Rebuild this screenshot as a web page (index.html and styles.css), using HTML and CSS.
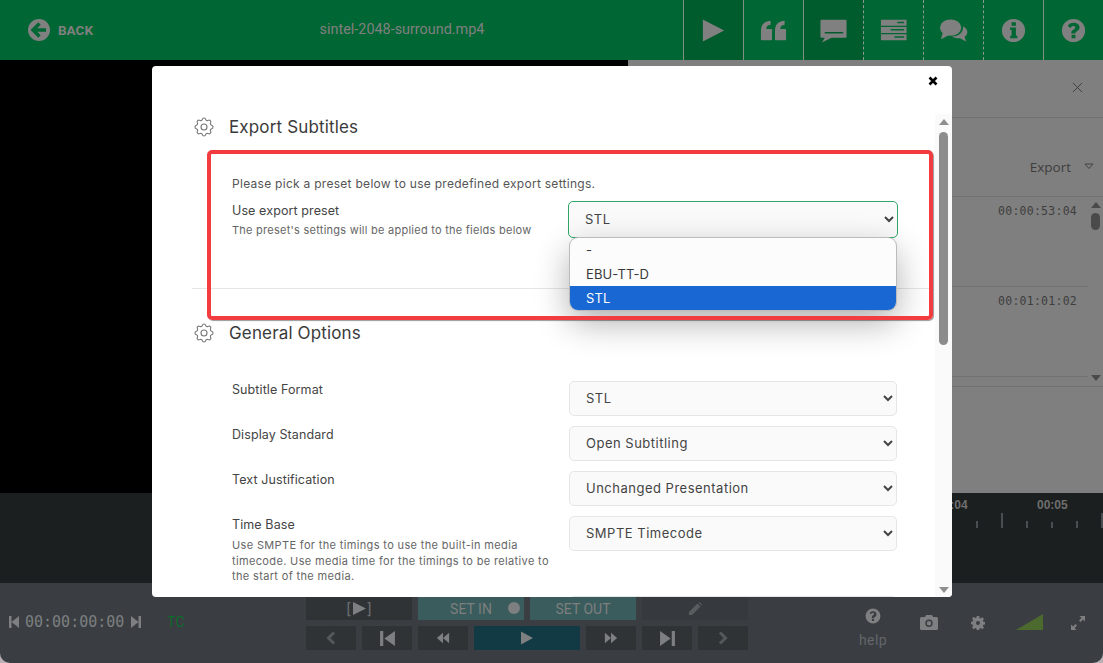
FILE: index.html
```html
<!DOCTYPE html>
<html lang="en">
<head>
<meta charset="utf-8">
<title>Export Subtitles</title>
<link rel="stylesheet" href="styles.css">
</head>
<body>
<svg class="defs" width="0" height="0" aria-hidden="true">
  <symbol id="cog" viewBox="0 0 24 24">
    <path d="M10.325 4.317c.426-1.756 2.924-1.756 3.35 0a1.724 1.724 0 002.573 1.066c1.543-.94 3.31.826 2.37 2.37a1.724 1.724 0 001.065 2.572c1.756.426 1.756 2.924 0 3.35a1.724 1.724 0 00-1.066 2.573c.94 1.543-.826 3.31-2.37 2.37a1.724 1.724 0 00-2.572 1.065c-.426 1.756-2.924 1.756-3.35 0a1.724 1.724 0 00-2.573-1.066c-1.543.94-3.31-.826-2.37-2.37a1.724 1.724 0 00-1.065-2.572c-1.756-.426-1.756-2.924 0-3.35a1.724 1.724 0 001.066-2.573c-.94-1.543.826-3.31 2.37-2.37.996.608 2.296.07 2.572-1.065z" fill="none" stroke="currentColor" stroke-width="1.1"/>
    <circle cx="12" cy="12" r="3" fill="none" stroke="currentColor" stroke-width="1.1"/>
  </symbol>
</svg>
<div class="app">
  <header class="topbar">
    <a class="back">
      <svg class="back-icon" viewBox="0 0 22 22"><circle cx="11" cy="11" r="11" fill="#808080"/><path d="M11.500 4.500 5 11l6.500 6.500M5.500 11H18" fill="none" stroke="#006633" stroke-width="3.400"/></svg>
      <span>BACK</span>
    </a>
    <div class="filename">sintel-2048-surround.mp4</div>
    <div class="cell active"><svg class="ic" viewBox="0 0 30 30"><path d="M4 3.500 26 15 4 26.500z"/></svg></div>
    <div class="cell"><svg class="ic" viewBox="0 0 30 30"><path d="M2 16C2 9 5 5.500 12 5v4c-3 .2-4.500 2-4.500 4.500H12.500a1 1 0 0 1 1 1V24a1 1 0 0 1-1 1H3a1 1 0 0 1-1-1zM16.500 16c0-7 3-10.500 10-11v4c-3 .2-4.500 2-4.500 4.500H27a1 1 0 0 1 1 1V24a1 1 0 0 1-1 1h-9.500a1 1 0 0 1-1-1z"/></svg></div>
    <div class="cell active"><svg class="ic" viewBox="0 0 30 30"><path fill-rule="evenodd" d="M2.500 4h25a1 1 0 0 1 1 1v16.500a1 1 0 0 1-1 1H13L3 27.500l3-5H2.500a1 1 0 0 1-1-1V5a1 1 0 0 1 1-1zM6 16.500v1.500h19v-1.500z"/></svg></div>
    <div class="cell dashed"><svg class="ic" viewBox="0 0 30 30"><path fill-rule="evenodd" d="M2 4h26.500v6H2zM19 6v1.500h7V6zM2 11.500h26.500v6H2zM12 13.500V15h14v-1.500zM2 19h26.500v6H2zM16 21v1.500h10V21z"/></svg></div>
    <div class="cell dashed"><svg class="ic" viewBox="0 0 30 30"><ellipse cx="12" cy="12" rx="11" ry="8.500"/><path d="M4 17 2 24l8-4z"/><path d="M25 10.500c3 1.800 4.500 4 4.300 6.500-.2 2-1.300 3.500-2.800 4.500L28 26.500l-6.500-3.500c-3 .3-6-.3-8-2 6 .3 12-3.500 11.500-10.500z"/></svg></div>
    <div class="cell dashed"><svg class="ic" viewBox="0 0 30 30"><path fill-rule="evenodd" d="M15 3a12 12 0 1 1 0 24 12 12 0 0 1 0-24zM13 6.500V10h4.500V6.500zM11.500 12v2.500H13v6h-1.500V23h7.500v-2.500h-1.500V12z"/></svg></div>
    <div class="cell"><svg class="ic" viewBox="0 0 30 30"><path fill-rule="evenodd" d="M15 3a12 12 0 1 1 0 24 12 12 0 0 1 0-24zM13 19.500V23h4v-3.500zM15.200 7c-3 0-5 1.300-6 3.300l2.600 2c.7-1.200 1.700-2 3-2 1.200 0 2 .6 2 1.500 0 2-4 2.200-4 5.200V18h4c0-2 4.500-2.300 4.500-6.300C21.300 8.800 18.300 7 15.200 7z"/></svg></div>
  </header>

  <main class="stage">
    <div class="video"></div>
    <aside class="panel">
      <div class="panel-head"><svg class="panel-x" viewBox="0 0 12 12"><path d="M1 1l10 10M11 1 1 11" fill="none" stroke="#3c3c3c" stroke-width="1"/></svg></div>
      <div class="panel-tools">
        <span>Export</span>
        <svg class="export-caret" viewBox="0 0 10 7"><path d="M1 1h8L5 5.500z" fill="none" stroke="#444" stroke-width="1"/></svg>
      </div>
      <div class="panel-list">
        <div class="rows">
          <div class="row">00:00:53:04</div>
          <div class="row">00:01:01:02</div>
          <div class="row">00:01:15:16</div>
        </div>
        <div class="list-scroll">
          <i class="arrow up dark"></i>
          <i class="list-thumb"></i>
          <i class="arrow down dark"></i>
        </div>
      </div>
    </aside>
  </main>

  <section class="timeline">
    <div class="ruler">
      <span class="stamp first">00:04</span>
      <span class="stamp second">00:05</span>
      <div class="ticks">
        <i class="tick"></i><i class="tick tall"></i><i class="tick"></i><i class="tick low"></i><i class="tick"></i><i class="tick tall"></i>
      </div>
    </div>
  </section>

  <footer class="controls">
    <div class="clock">
      <svg class="skip" viewBox="0 0 10 12"><path d="M0 0h2.500v12H0zM10 0v12L2.500 6z"/></svg>
      <span class="time">00:00:00:00</span>
      <svg class="skip" viewBox="0 0 10 12"><path d="M0 0l7.500 6L0 12zM7.500 0H10v12H7.500z"/></svg>
      <span class="tc">TC</span>
    </div>
    <div class="pad">
      <div class="btn w2 mark">[<svg viewBox="0 0 12 12"><path d="M0 0l12 6-12 6z"/></svg>]</div>
      <div class="btn w2 teal">SET IN<i class="rec"></i></div>
      <div class="btn w2 teal">SET OUT</div>
      <div class="btn w2 edit"><svg class="dim" viewBox="0 0 14 14"><path d="M1 10 9.500 1.500l3 3L4 13H1zM10.500.5l1-.5 2.500 2.500-.5 1z"/></svg></div>
      <div class="btn"><svg class="dim chev" viewBox="0 0 10 14"><path d="M8 1.500 2.500 7 8 12.500" fill="none" stroke-width="3"/></svg></div>
      <div class="btn"><svg class="big" viewBox="0 0 16 14"><path d="M1 0h3v14H1zM15 0v14L5 7z"/></svg></div>
      <div class="btn"><svg viewBox="0 0 16 14"><path d="M8 1v12L1 7zM15 1v12L8 7z"/></svg></div>
      <div class="btn w2 play"><svg viewBox="0 0 14 14"><path d="M1 .5 13 7 1 13.500z"/></svg></div>
      <div class="btn"><svg viewBox="0 0 16 14"><path d="M1 1v12l7-6zM8 1v12l7-6z"/></svg></div>
      <div class="btn"><svg class="big" viewBox="0 0 16 14"><path d="M1 0v14l10-7zM12 0h3v14h-3z"/></svg></div>
      <div class="btn"><svg class="dim chev" viewBox="0 0 10 14"><path d="M2 1.500 7.500 7 2 12.500" fill="none" stroke-width="3"/></svg></div>
    </div>
    <div class="tools">
      <div class="help">
        <svg viewBox="0 0 30 30"><path fill-rule="evenodd" d="M15 1a14 14 0 1 1 0 28 14 14 0 0 1 0-28zM13 20.500V24.500h4v-4zM15.200 6c-3.400 0-5.500 1.500-6.600 3.600l2.800 2.100c.8-1.300 1.800-2.200 3.400-2.200 1.300 0 2.200.6 2.200 1.700 0 2.200-4.200 2.400-4.200 5.800V19h4c0-2.300 4.700-2.500 4.700-7C21.500 8 18.500 6 15.200 6z"/></svg>
        <span>help</span>
      </div>
      <svg class="tool camera" viewBox="0 0 18 15"><path fill-rule="evenodd" d="M6 0h6l1 2h3.500A1.500 1.500 0 0 1 18 3.500v10a1.500 1.500 0 0 1-1.500 1.500h-15A1.500 1.500 0 0 1 0 13.500v-10A1.500 1.500 0 0 1 1.500 2H5zM9 4.500a3.700 3.700 0 1 0 0 7.400 3.700 3.700 0 0 0 0-7.400zM9 6a2.200 2.200 0 1 1 0 4.400A2.200 2.200 0 0 1 9 6z"/></svg>
      <svg class="tool gear" viewBox="0 0 14 14"><path fill-rule="evenodd" d="M5.800 0h2.400l.3 2 1.100.5 1.700-1.200 1.700 1.700-1.200 1.700.5 1.100 2 .3v2.400l-2 .3-.5 1.100 1.200 1.700-1.700 1.700-1.700-1.200-1.100.5-.3 2H5.800l-.3-2-1.100-.5-1.700 1.200L1 11.200l1.200-1.700-.5-1.100-2-.3V5.700l2-.3.500-1.100L1 2.600 2.700.9l1.700 1.200 1.100-.5zM7 5a2 2 0 1 0 0 4 2 2 0 0 0 0-4z"/></svg>
      <svg class="tool volume" viewBox="0 0 27 16"><path d="M0 16 27 0v16z"/></svg>
      <svg class="tool expand" viewBox="0 0 14 14"><path d="M8.500 0H14v5.500L12 3.500 9.500 6 8 4.500 10.500 2zM5.500 14H0V8.500L2 10.500 4.500 8 6 9.500 3.500 12z"/></svg>
    </div>
  </footer>
</div>

<div class="modal">
  <div class="modal-head">
    <svg class="modal-close" viewBox="0 0 10 10"><path d="M1.500 1.500l7 7M8.500 1.500l-7 7" fill="none" stroke="#000" stroke-width="2.600"/></svg>
  </div>
  <div class="modal-body">
    <div class="modal-scroll">
      <h2 class="section-title"><svg class="cog"><use href="#cog"/></svg>Export Subtitles</h2>
      <div class="section first">
        <p class="intro">Please pick a preset below to use predefined export settings.</p>
        <div class="field">
          <div>
            <div class="label">Use export preset</div>
            <div class="hint preset-hint">The preset's settings will be applied to the fields below</div>
          </div>
          <select class="select focused"><option>STL</option></select>
        </div>
      </div>
      <hr class="divider">
      <h2 class="section-title"><svg class="cog"><use href="#cog"/></svg>General Options</h2>
      <div class="section rows-block">
        <div class="field"><div class="label">Subtitle Format</div><select class="select"><option>STL</option></select></div>
        <div class="field"><div class="label">Display Standard</div><select class="select"><option>Open Subtitling</option></select></div>
        <div class="field"><div class="label">Text Justification</div><select class="select"><option>Unchanged Presentation</option></select></div>
        <div class="field tall"><div><div class="label">Time Base</div><div class="hint">Use SMPTE for the timings to use the built-in media timecode. Use media time for the timings to be relative to the start of the media.</div></div><select class="select"><option>SMPTE Timecode</option></select></div>
        <div class="field"><div></div><select class="select"><option>25</option></select></div>
      </div>
    </div>
    <div class="modal-scrollbar">
      <i class="arrow up"></i>
      <i class="thumb"></i>
      <i class="arrow down"></i>
    </div>
  </div>
  <ul class="dropdown">
    <li>-</li>
    <li>EBU-TT-D</li>
    <li class="selected">STL</li>
  </ul>
  <div class="callout"></div>
</div>
</body>
</html>
```
FILE: styles.css
```css
* { box-sizing: border-box; }
html, body { margin: 0; height: 100%; overflow: hidden; background: #b8b0b4; }
body { font-family: "Inter", "Open Sans", sans-serif; color: #3a3a3a; }
.defs { position: absolute; }
svg { display: block; }
p, h2, ul { margin: 0; padding: 0; }

.app { display: flex; flex-direction: column; height: 663px; }

/* top bar */
.topbar { display: flex; height: 60px; background: #006633; color: #808080; font-family: "Liberation Sans Narrow", "Roboto", sans-serif; }
.back { flex: 0 0 121px; display: flex; align-items: center; gap: 8px; padding-left: 28px; font-weight: 700; font-size: 13.500px; }
.back-icon { width: 22px; height: 22px; }
.filename { flex: 1; text-align: center; line-height: 59px; font-size: 14.400px; }
.cell { flex: 0 0 60px; display: flex; align-items: center; justify-content: center; border-left: 1px solid #7f8f85; }
.cell.active { background: #005c2d; }
.cell.dashed { border-left: 1px dashed #8a9a90; }
.ic { width: 29px; height: 29px; fill: #808080; }

/* middle */
.stage { display: flex; height: 433px; }
.video { width: 628px; background: #000; }
.panel { flex: 1; background: #7f7f7f; color: #3e3e3e; }
.panel-head { display: flex; justify-content: flex-end; align-items: center; height: 58px; padding: 0 20px 2px 0; border-bottom: 1px solid #727272; }
.panel-x { width: 11px; height: 11px; }
.panel-tools { display: flex; align-items: center; justify-content: flex-end; gap: 13px; height: 79px; padding: 19px 9px 0 0; border-bottom: 1px solid #727272; font-family: "Open Sans", sans-serif; font-size: 13.500px; }
.export-caret { width: 10px; height: 7px; }
.panel-list { display: flex; height: 190px; border-bottom: 1px solid #727272; overflow: hidden; }
.rows { flex: 1; }
.row { height: 90px; padding: 7px 11px 0 0; border-bottom: 1px solid #727272; text-align: right; font: 11.500px/15px "DejaVu Sans Mono", monospace; letter-spacing: .25px; }
.list-scroll { flex: 0 0 15px; position: relative; display: flex; flex-direction: column; align-items: center; }
.list-thumb { width: 9px; height: 17px; margin-top: 5px; border-radius: 5px; background: #4a4a4a; }
.arrow { display: block; width: 0; height: 0; border-left: 5px solid transparent; border-right: 5px solid transparent; }
.arrow.up { border-bottom: 6px solid #8f8f8f; }
.arrow.down { border-top: 6px solid #8f8f8f; margin-top: auto; }
.arrow.up.dark { border-bottom-color: #4a4a4a; margin-top: 5px; }
.arrow.down.dark { border-top-color: #4a4a4a; margin-bottom: 5px; }

/* timeline */
.timeline { height: 90px; background: #1c1f20; overflow: hidden; }
.ruler { position: relative; height: 100%; padding: 20px 0 0 952px; }
.stamp { position: absolute; top: 5px; font: 700 12px/15px "Liberation Sans", sans-serif; color: #6e6e6e; }
.stamp.first { left: 937px; }
.stamp.second { left: 1037px; }
.ticks { display: flex; align-items: flex-end; width: 160px; height: 15px; gap: 23px; padding-left: 24px; }
.tick { flex: 0 0 2px; height: 7px; background: #4a4d4f; }
.tick.low { height: 6px; }
.tick.tall { height: 15px; }

/* controls */
.controls { flex: 1; display: flex; background: #3a3e42; border-radius: 0 0 10px 10px; }
.clock { flex: 0 0 306px; display: flex; align-items: center; padding: 0 0 3px 9px; color: #7d7f80; }
.skip { width: 10px; height: 12px; fill: #7d7f80; }
.time { margin: 0 7px 0 6px; font: 15px/18px "DejaVu Sans Mono", monospace; }
.tc { margin-left: 26px; font: 14px/18px "Liberation Sans Narrow", "Roboto", sans-serif; color: #0a6a2a; }
.pad { flex: 0 0 442px; display: grid; grid-template-columns: repeat(8, 50px); grid-template-rows: 30px 24px; gap: 6px; padding-top: 7px; }
.btn { display: flex; align-items: center; justify-content: center; background: #2f3336; color: #7d7f80; font: 14px/18px "Liberation Sans Narrow", "Roboto", sans-serif; fill: #7d7f80; stroke: none; }
.btn svg { width: 14px; height: 14px; }
.btn .big { width: 17px; height: 15px; }
.btn .dim { fill: #5a5d60; }
.btn .chev { fill: none; stroke: #55585b; }
.w2 { grid-column: span 2; }
.mark { background: #2f3336; padding-top: 7px; gap: 2px; font-size: 15px; color: #6a6d70; }
.btn.mark svg { width: 13px; height: 13px; }
.teal { background: #3a5c5c; padding-top: 7px; font-size: 14px; position: relative; }
.edit { padding-top: 7px; background: #36393d; }
.rec { position: absolute; right: 4px; top: 12px; width: 12px; height: 12px; border-radius: 50%; background: #7d7f80; }
.play { background: #113a44; }
.tools { flex: 1; display: flex; align-items: flex-start; padding-left: 110px; }
.help { display: flex; flex-direction: column; align-items: center; width: 30px; margin-top: 25px; color: #63666a; font: 14px/16px "Liberation Sans Narrow", "Roboto", sans-serif; letter-spacing: .4px; }
.help svg { width: 16px; height: 16px; margin-bottom: 8px; fill: #7d7f80; }
.tool { fill: #7d7f80; }
.camera { width: 18px; height: 15px; margin: 32px 0 0 32px; }
.gear { width: 14px; height: 14px; margin: 33px 0 0 33px; }
.volume { width: 27px; height: 16px; margin: 31px 0 0 31px; fill: #4d6a2e; }
.expand { width: 14px; height: 14px; margin: 33px 0 0 28px; }

/* modal */
.modal { position: absolute; left: 152px; top: 66px; width: 800px; height: 531px; background: #fff; border-radius: 4px; overflow: hidden; }
.modal-head { display: flex; justify-content: flex-end; height: 48px; padding: 10px 14px 0 0; }
.modal-close { width: 10px; height: 10px; }
.modal-body { display: flex; height: 483px; }
.modal-scroll { width: 783px; height: 483px; overflow: hidden; padding: 0 5px 0 40px; }
.section-title { display: flex; align-items: center; height: 26px; font-size: 17px; font-weight: 400; letter-spacing: .15px; color: #3a3a3a; }
.cog { width: 24px; height: 24px; margin-right: 13px; color: #777; }
.section { padding-left: 40px; }
.section.first { height: 148px; padding-top: 35px; }
.rows-block { padding-top: 35px; }
.intro { height: 18px; margin-bottom: 9px; font-size: 12px; line-height: 18px; color: #555; letter-spacing: .28px; }
.field { display: grid; grid-template-columns: 337px 328px; min-height: 35px; margin-bottom: 10px; }
.field.tall { min-height: 70px; }
.label { font-size: 12.500px; line-height: 17px; color: #444; letter-spacing: .1px; }
.hint { width: 325px; margin-top: 5px; font-size: 11px; line-height: 15.500px; color: #666; letter-spacing: .35px; }
.preset-hint { width: auto; margin-top: 4px; letter-spacing: .25px; }
.select { width: 328px; height: 35px; padding: 0 12px 2px; font: 13px "Inter", sans-serif; letter-spacing: .5px; color: #444; background: #fafafa; border: 1px solid #e6e6e6; border-radius: 5px; }
.select.focused { border-color: #2da866; width: 330px; height: 37px; margin: -1px 0 0 -1px; }
.divider { height: 1px; margin: 0 0 31px 0; border: 0; background: #e6e6e6; }
.modal-scrollbar { flex: 0 0 17px; display: flex; flex-direction: column; align-items: center; background: #fafafa; padding: 5px 0 4px; }
.thumb { width: 9px; height: 213px; margin-top: 7px; border-radius: 5px; background: #8c8c8c; }
.dropdown { position: absolute; left: 418px; top: 172px; width: 326px; height: 72px; list-style: none; background: #fcfcfc; border-radius: 8px; overflow: hidden; box-shadow: 0 0 0 1px #bbb, 0 12px 34px rgba(0,0,0,.32); font-size: 13px; letter-spacing: .1px; }
.dropdown li { height: 24px; padding-left: 16px; line-height: 24px; color: #3a3a3a; }
.dropdown .selected { background: #1967d2; color: #fff; }
.callout { position: absolute; left: 55px; top: 84px; width: 726px; height: 170px; border: 4px solid #f23c40; border-radius: 5px; box-shadow: 1px 1px 1px rgba(0,0,0,.4); pointer-events: none; }
```
